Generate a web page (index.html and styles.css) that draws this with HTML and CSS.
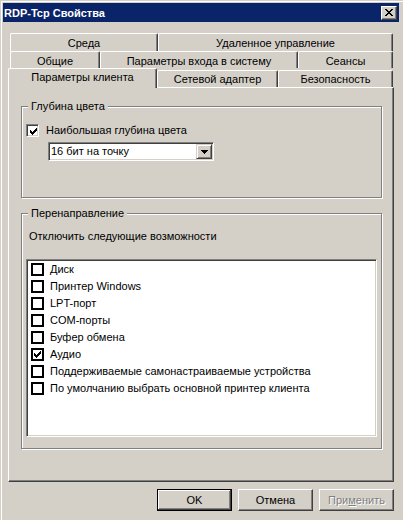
FILE: index.html
```html
<!DOCTYPE html>
<html lang="ru">
<head>
<meta charset="utf-8">
<title>RDP-Tcp Свойства</title>
<link rel="stylesheet" href="styles.css">
</head>
<body>
<div class="window">
  <div class="titlebar">
    <span class="title">RDP-Tcp Свойства</span>
    <span class="close">
      <svg width="8" height="7" viewBox="0 0 8 7"><path fill="#000" d="M0 0h2v1h-2z M6 0h2v1h-2z M1 1h2v1h-2z M5 1h2v1h-2z M2 2h4v1h-4z M3 3h2v1h-2z M2 4h4v1h-4z M1 5h2v1h-2z M5 5h2v1h-2z M0 6h2v1h-2z M6 6h2v1h-2z"/></svg>
    </span>
  </div>

  <div class="tabrow r1">
    <div class="tab w-sreda">Среда</div>
    <div class="tab w-remote">Удаленное управление</div>
  </div>
  <div class="tabrow r2">
    <div class="tab w-general">Общие</div>
    <div class="tab w-logon">Параметры входа в систему</div>
    <div class="tab w-sessions">Сеансы</div>
  </div>
  <div class="tabrow r3">
    <div class="tab selected w-client">Параметры клиента</div>
    <div class="tab w-net">Сетевой адаптер</div>
    <div class="tab w-sec">Безопасность</div>
  </div>

  <div class="panel">
    <div class="group g1">
      <div class="legend">Глубина цвета</div>
      <div class="chkrow">
        <span class="cb3d">
          <svg width="7" height="7" viewBox="0 0 7 7"><path fill="#000" d="M0 2h1v3h-1z M1 3h1v3h-1z M2 4h1v3h-1z M3 3h1v3h-1z M4 2h1v3h-1z M5 1h1v3h-1z M6 0h1v3h-1z"/></svg>
        </span>
        <span class="chklabel">Наибольшая глубина цвета</span>
      </div>
      <div class="combo">
        <span class="combo-text">16 бит на точку</span>
        <span class="combo-btn">
          <svg width="7" height="4" viewBox="0 0 7 4"><path fill="#000" d="M0 0h7v1h-7z M1 1h5v1h-5z M2 2h3v1h-3z M3 3h1v1h-1z"/></svg>
        </span>
      </div>
    </div>

    <div class="group g2">
      <div class="legend">Перенаправление</div>
      <div class="desc">Отключить следующие возможности</div>
      <div class="listbox">
        <div class="item"><span class="cbflat"></span><span class="itemlabel">Диск</span></div>
        <div class="item"><span class="cbflat"></span><span class="itemlabel">Принтер Windows</span></div>
        <div class="item"><span class="cbflat"></span><span class="itemlabel">LPT-порт</span></div>
        <div class="item"><span class="cbflat"></span><span class="itemlabel">COM-порты</span></div>
        <div class="item"><span class="cbflat"></span><span class="itemlabel">Буфер обмена</span></div>
        <div class="item"><span class="cbflat"><svg width="7" height="7" viewBox="0 0 7 7"><path fill="#000" d="M0 2h1v3h-1z M1 3h1v3h-1z M2 4h1v3h-1z M3 3h1v3h-1z M4 2h1v3h-1z M5 1h1v3h-1z M6 0h1v3h-1z"/></svg></span><span class="itemlabel">Аудио</span></div>
        <div class="item"><span class="cbflat"></span><span class="itemlabel">Поддерживаемые самонастраиваемые устройства</span></div>
        <div class="item"><span class="cbflat"></span><span class="itemlabel">По умолчанию выбрать основной принтер клиента</span></div>
      </div>
    </div>
  </div>

  <div class="buttons">
    <div class="btn default">OK</div>
    <div class="btn">Отмена</div>
    <div class="btn disabled">При<u>м</u>енить</div>
  </div>
</div>
</body>
</html>
```

FILE: styles.css
```css
* { box-sizing: border-box; }

body {
  margin: 0;
  background: #d4d0c8;
  font-family: "Liberation Sans", Arial, sans-serif;
  font-size: 11px;
  color: #000;
}

.window {
  width: 403px;
  height: 520px;
  overflow: hidden;
  border-top: 1px solid #d4d0c8;
  border-left: 1px solid #d4d0c8;
  box-shadow: inset 1px 1px #fff;
  padding: 2px 4px 0 2px;
}

.titlebar {
  height: 19px;
  background: #0a246a;
  color: #fff;
  display: flex;
  align-items: center;
  justify-content: space-between;
  padding: 0 2px 0 1px;
}

.title {
  font-weight: bold;
  font-size: 11px;
}

.close {
  width: 16px;
  height: 14px;
  background: #d4d0c8;
  border-top: 1px solid #fff;
  border-left: 1px solid #fff;
  border-right: 1px solid #404040;
  border-bottom: 1px solid #404040;
  box-shadow: inset -1px -1px #808080;
  display: flex;
  align-items: center;
  justify-content: center;
  padding-right: 1px;
}
.close svg { display: block; }

/* tabs */
.tabrow {
  display: flex;
  margin-left: 7px;
}
.r1 { margin-top: 11px; height: 18px; }
.r2 { height: 17px; }
.r3 { height: 19px; margin-left: 5px; align-items: flex-end; }

.tab {
  height: 100%;
  background: #d4d0c8;
  border-left: 1px solid #fff;
  border-top: 1px solid #fff;
  border-right: 1px solid #404040;
  box-shadow: inset -1px 0 #808080;
  border-radius: 2px 2px 0 0;
  display: flex;
  justify-content: center;
  align-items: flex-start;
  padding-top: 3px;
  line-height: 13px;
  white-space: nowrap;
}
.r3 .tab { height: 17px; padding-top: 2px; }
.r3 .tab.selected {
  height: 20px;
  margin-bottom: -1px;
  z-index: 1;
  padding-top: 2px;
}

.w-sreda { width: 148px; }
.w-remote { width: 235px; }
.w-general { width: 90px; }
.w-logon { width: 198px; }
.w-sessions { width: 95px; }
.w-client { width: 149px; }
.w-net { width: 121px; }
.w-sec { width: 115px; }

/* panel */
.panel {
  margin-left: 5px;
  width: 386px;
  height: 395px;
  border-top: 1px solid #fff;
  border-left: 1px solid #fff;
  border-right: 1px solid #404040;
  border-bottom: 1px solid #404040;
  box-shadow: inset -1px -1px #808080;
  padding: 18px 0 0 12px;
}

.group {
  width: 361px;
  border: 1px solid #808080;
  box-shadow: inset 1px 1px #fff, 1px 1px #fff;
}
.g1 { height: 92px; }
.g2 { height: 236px; margin-top: 15px; }

.legend {
  width: fit-content;
  margin: -7px 0 0 6px;
  padding: 0 3px;
  height: 13px;
  line-height: 13px;
  background: #d4d0c8;
}

.chkrow {
  display: flex;
  align-items: center;
  height: 13px;
  margin: 11px 0 0 4px;
}

.cb3d {
  width: 13px;
  height: 13px;
  background: #fff;
  border-top: 1px solid #808080;
  border-left: 1px solid #808080;
  border-right: 1px solid #fff;
  border-bottom: 1px solid #fff;
  box-shadow: inset 1px 1px #404040, inset -1px -1px #d4d0c8;
  display: flex;
  align-items: center;
  justify-content: center;
  padding: 1px 0 0 1px;
}
.cb3d svg, .cbflat svg, .combo-btn svg { display: block; }

.chklabel {
  margin-left: 7px;
  line-height: 13px;
}

.combo {
  width: 166px;
  height: 19px;
  margin: 5px 0 0 26px;
  background: #fff;
  border-top: 1px solid #808080;
  border-left: 1px solid #808080;
  border-right: 1px solid #fff;
  border-bottom: 1px solid #fff;
  box-shadow: inset 1px 1px #404040, inset -1px -1px #d4d0c8;
  padding: 1px;
  display: flex;
  align-items: center;
}
.combo-text {
  flex: 1;
  padding-left: 1px;
  line-height: 15px;
}
.combo-btn {
  width: 16px;
  height: 15px;
  background: #d4d0c8;
  border-top: 1px solid #d4d0c8;
  border-left: 1px solid #d4d0c8;
  border-right: 1px solid #404040;
  border-bottom: 1px solid #404040;
  box-shadow: inset 1px 1px #fff, inset -1px -1px #808080;
  display: flex;
  align-items: center;
  justify-content: center;
}

.desc {
  margin: 10px 0 0 7px;
  line-height: 13px;
}

.listbox {
  width: 351px;
  height: 178px;
  margin: 16px 0 0 4px;
  background: #fff;
  border-top: 1px solid #808080;
  border-left: 1px solid #808080;
  border-right: 1px solid #fff;
  border-bottom: 1px solid #fff;
  box-shadow: inset 1px 1px #404040, inset -1px -1px #d4d0c8;
  padding: 1px;
}

.item {
  height: 17px;
  display: flex;
  align-items: center;
  padding-left: 3px;
}

.cbflat {
  width: 13px;
  height: 13px;
  border: 2px solid #000;
  background: #fff;
  display: flex;
  align-items: center;
  justify-content: center;
}

.itemlabel {
  margin-left: 6px;
  line-height: 13px;
  white-space: nowrap;
}

/* buttons */
.buttons {
  display: flex;
  justify-content: flex-end;
  gap: 6px;
  margin-top: 7px;
  padding-right: 5px;
}

.btn {
  width: 75px;
  height: 22px;
  display: flex;
  align-items: center;
  justify-content: center;
  font-weight: normal;
  border-top: 1px solid #fff;
  border-left: 1px solid #fff;
  border-right: 1px solid #404040;
  border-bottom: 1px solid #404040;
  box-shadow: inset -1px -1px #808080;
}

.btn.default {
  border: 1px solid #000;
  box-shadow: inset -1px -1px #404040, inset 1px 1px #fff, inset -2px -2px #808080;
}

.btn.disabled {
  color: #808080;
  text-shadow: 1px 1px #fff;
}
.btn.disabled u { text-decoration-color: #808080; }
```
